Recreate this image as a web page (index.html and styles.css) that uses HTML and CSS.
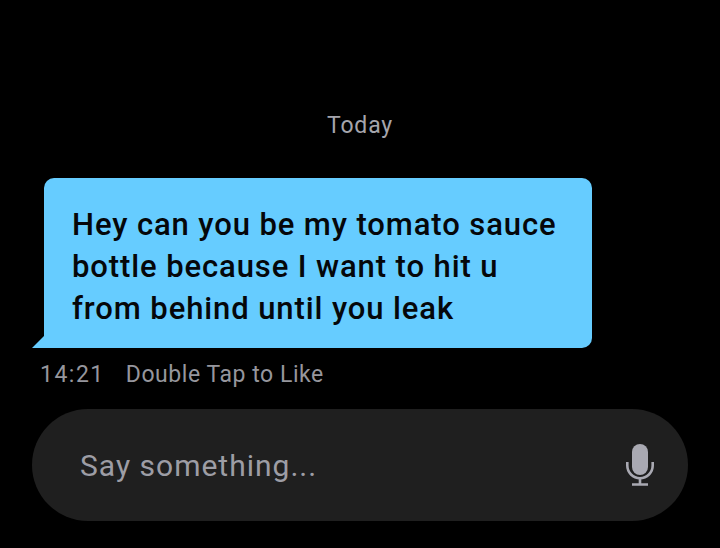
FILE: index.html
```html
<!DOCTYPE html>
<html lang="en">
<head>
  <meta charset="UTF-8" />
  <title>Chat</title>
  <link rel="stylesheet" href="styles.css">
</head>
<body>
  <div class="chat">
    <p class="day">Today</p>
    <div class="bubble">Hey can you be my tomato sauce bottle because I want to hit u from behind until you leak</div>
    <div class="meta">
      <span class="time">14:21</span>
      <span class="like">Double Tap to Like</span>
    </div>
    <div class="composer">
      <span class="placeholder">Say something...</span>
      <svg class="mic" width="28" height="42" viewBox="0 0 28 42">
        <rect x="6" y="0" width="16" height="31" rx="8" fill="#a9a9b2" />
        <path d="M1.300 18v3.500a12.700 12.700 0 0 0 25.400 0v-3.500" fill="none" stroke="#a9a9b2" stroke-width="2.600" />
        <path d="M14 34v6M6 40.500h16" fill="none" stroke="#a9a9b2" stroke-width="2.600" />
      </svg>
    </div>
  </div>
</body>
</html>
```

FILE: styles.css
```css
* {
  box-sizing: border-box;
}
body {
  margin: 0;
  background: #000;
  font-family: Roboto, sans-serif;
}
.chat {
  width: 720px;
  height: 548px;
  padding: 110px 32px 0;
  overflow: hidden;
}
.day {
  margin: 0;
  text-align: center;
  font-size: 23px;
  letter-spacing: 0.8px;
  line-height: 32px;
  color: #a5a5ac;
}
.bubble {
  position: relative;
  width: 548px;
  height: 170px;
  margin: 36px 0 0 12px;
  padding: 26px 28px 0;
  background: #66ccff;
  border-radius: 10px 10px 10px 0;
  color: #05070a;
  font-size: 31px;
  letter-spacing: 0.9px;
  line-height: 42px;
  font-weight: 500;
}
.bubble::after {
  content: "";
  position: absolute;
  left: -12px;
  bottom: 0;
  border-bottom: 12px solid #66ccff;
  border-left: 12px solid transparent;
}
.meta {
  display: flex;
  align-items: center;
  gap: 21px;
  margin: 10px 0 0 8px;
  height: 32px;
  color: #96969d;
  font-size: 23px;
  letter-spacing: 0.55px;
}
.time {
  letter-spacing: 1.500px;
}
.composer {
  display: flex;
  align-items: center;
  justify-content: space-between;
  width: 656px;
  height: 112px;
  margin-top: 19px;
  padding: 0 34px 0 48px;
  background: #1f1f1f;
  border-radius: 56px;
}
.placeholder {
  color: #9d9da5;
  font-size: 30px;
  letter-spacing: 1px;
}
```
